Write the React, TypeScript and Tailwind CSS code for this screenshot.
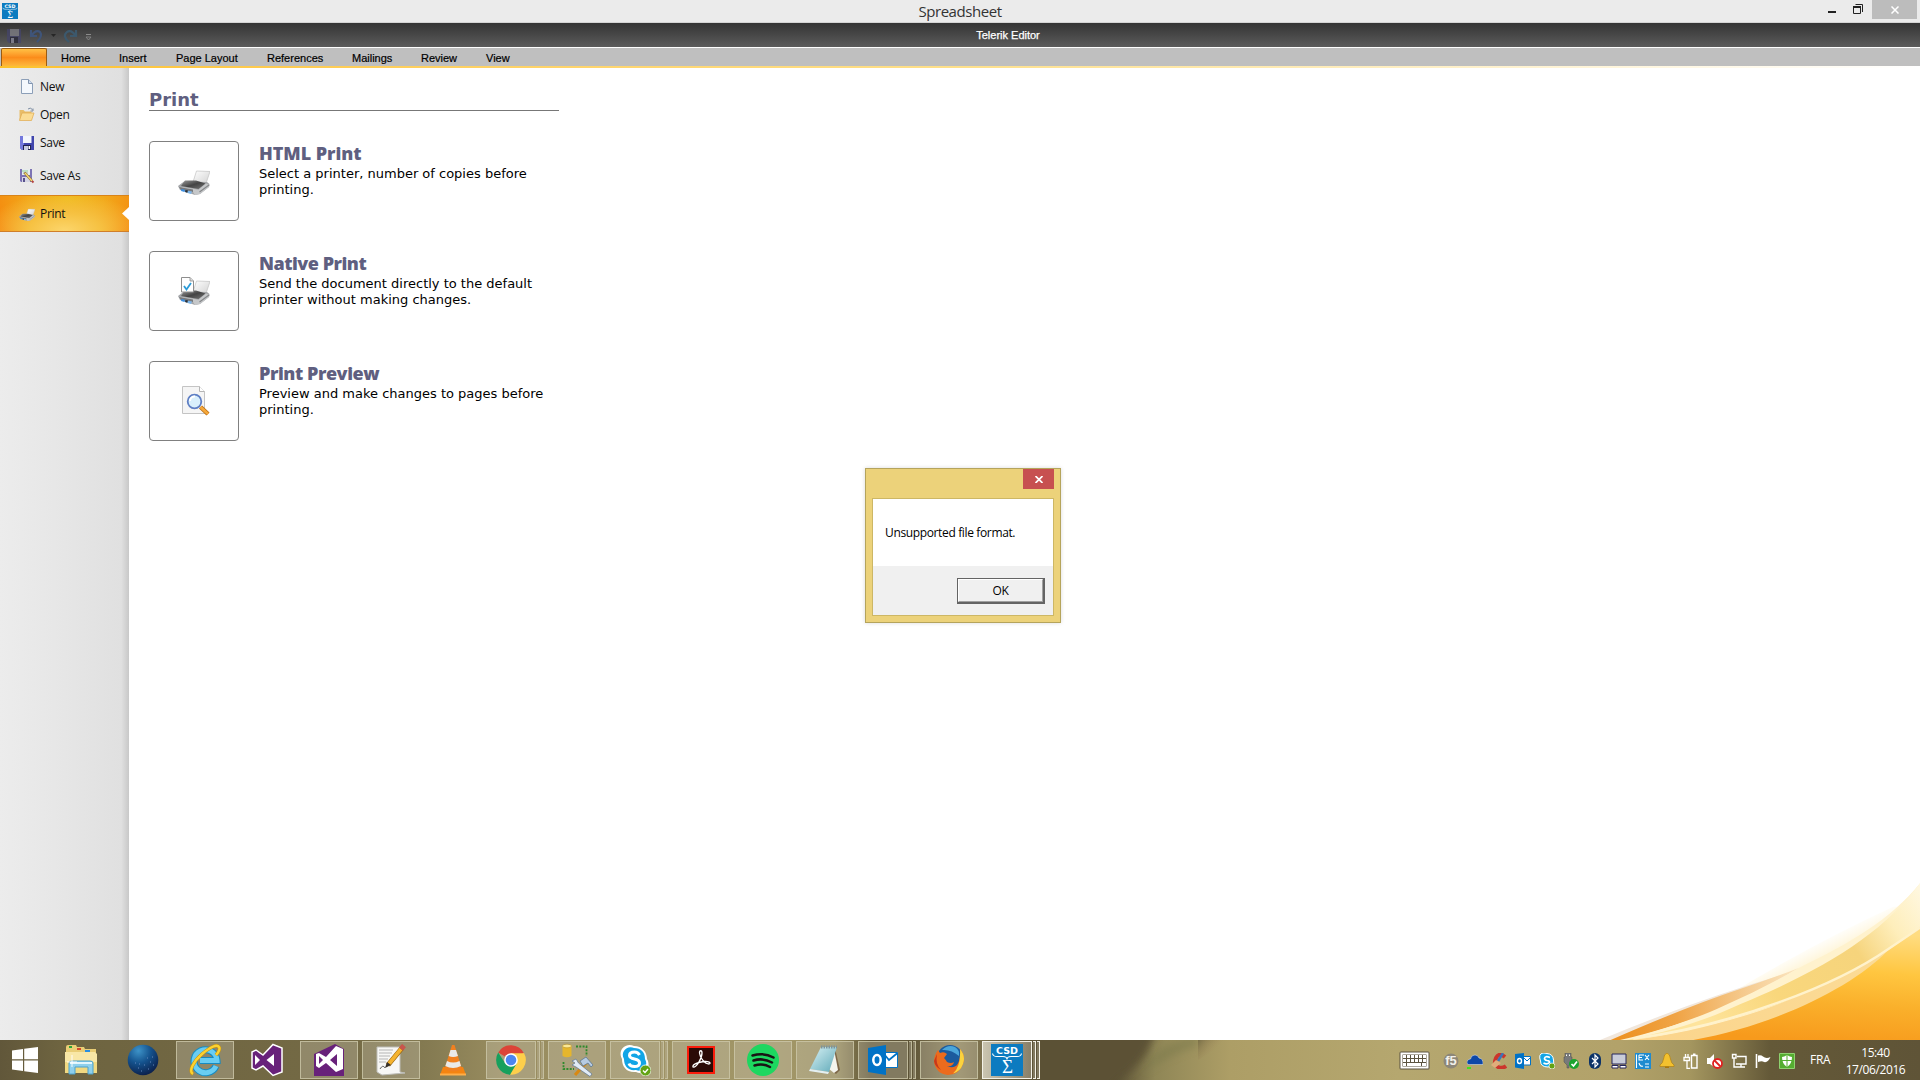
import type { ReactNode } from "react"
import clsx from "clsx"

function PrinterIcon({ size, checked = false }: { size: number; checked?: boolean }) {
  return (
    <svg width={size} height={size} viewBox="0 0 32 32">
      <defs>
        <linearGradient id="printerTop" x1="0" y1="0" x2="1" y2="1">
          <stop offset="0" stopColor="#9a9a9a" />
          <stop offset="0.5" stopColor="#444" />
          <stop offset="1" stopColor="#777" />
        </linearGradient>
        <linearGradient id="printerPaper" x1="0" y1="0" x2="1" y2="1">
          <stop offset="0" stopColor="#fff" />
          <stop offset="1" stopColor="#d0d0d0" />
        </linearGradient>
      </defs>
      <path d="M18.500 6L32 6.500L27.500 20L15 17z" fill="url(#printerPaper)" stroke="#c2c2c2" strokeWidth="0.7" />
      <path d="M0 21L6 16.500L29 17L31.500 19L31 22L22 29L17 30L2 25z" fill="#a4a6a9" />
      <path d="M7 15.500L18 15.500L27.500 18.500L20.500 24L3 21z" fill="url(#printerTop)" />
      <path d="M1 21.500L20.500 24.800L28 18.500L31.500 20L31 22L22 29L17 30L15 27z" fill="#c6c8ca" />
      <path d="M1 22L15 24.500L15 27L3 25z" fill="#77797c" />
      <path d="M3.500 24L7 24.700L6.500 27L3 26z" fill="#3c8ee0" />
      <path d="M7.500 25L10 25.500L9.500 28L7 27z" fill="#26313d" />
      <path d="M10 25.700L14 26.500L13 29L9.500 28z" fill="#7db7ec" />
      <path d="M21.500 27L31 20" stroke="#858789" strokeWidth="1.200" />
      {checked && (
        <>
          <path d="M3.500 2.500H12L15.500 6V17H3.500z" fill="#fff" stroke="#8e8e8e" />
          <path d="M12 2.500V6H15.500" fill="#ddd" stroke="#8e8e8e" strokeWidth="0.8" />
          <path d="M6 11L8.500 14.500L13 8" fill="none" stroke="#2a9bd8" strokeWidth="1.800" />
        </>
      )}
    </svg>
  )
}

function PreviewIcon() {
  return (
    <svg width="32" height="32" viewBox="0 0 32 32">
      <path d="M4.500 1.500H21.500L26.500 6.500V28.500H4.500z" fill="#f5f5f5" stroke="#c4c4c4" />
      <path d="M21.500 1.500V6.500H26.500" fill="#fff" stroke="#b5b5b5" />
      <path d="M22.500 22L30 29" stroke="#b86b12" strokeWidth="4.400" />
      <path d="M22.500 22L30 29" stroke="#f5a83a" strokeWidth="2.800" />
      <circle cx="16.500" cy="16.500" r="6.800" fill="#d9effc" stroke="#5f7fc4" strokeWidth="1.800" />
      <path d="M12 16a4.500 4.500 0 0 1 5-4.500" fill="none" stroke="#fff" strokeWidth="2" />
    </svg>
  )
}

function NewIcon() {
  return (
    <svg width="16" height="16" viewBox="0 0 16 16">
      <path d="M2.500 .5H9.500L13.500 4.500V14.500H2.500z" fill="#f4f8fd" stroke="#8c9fb8" />
      <path d="M9.500 .5V4.500H13.500" fill="#cfdcee" stroke="#8093ad" />
    </svg>
  )
}

function OpenIcon() {
  return (
    <svg width="16" height="16" viewBox="0 0 16 16">
      <path d="M0.500 3H4.500L6 4.500H12.500V13H0.500z" fill="#e8bd6a" />
      <path d="M3 6H15L12.500 13.500H0.500z" fill="#fbdc94" stroke="#e0a94d" strokeWidth="0.7" />
      <path d="M9 2Q12 -0.500 13.500 3M14 1.500V4H11.500" fill="none" stroke="#7e8ea4" />
    </svg>
  )
}

function SaveIcon() {
  return (
    <svg width="16" height="16" viewBox="0 0 16 16">
      <path d="M1 1H15V15H3L1 13z" fill="#4045ac" />
      <path d="M1 1H5V15H3L1 13z" fill="#7378dc" />
      <path d="M4 1H12.500V8H4z" fill="#f3f6fc" />
      <path d="M4 10H12V15H4z" fill="#20224f" />
      <path d="M5 11H9V15H5z" fill="#c7cbe4" />
      <path d="M9.500 11H11V14H9.500z" fill="#fff" />
    </svg>
  )
}

function SaveAsIcon() {
  return (
    <svg width="16" height="16" viewBox="0 0 16 16">
      <path d="M1 1H13V14H2L1 13z" fill="#7d74b4" />
      <path d="M3 1H11V7H3z" fill="#e6ecec" />
      <path d="M3 3H9" stroke="#8fd09a" />
      <path d="M4 5H9" stroke="#a9b9b9" />
      <path d="M3 9H11V14H3z" fill="#d5d5e4" />
      <path d="M4 10H6V14H4z" fill="#58528c" />
      <path d="M5.500 4.500L13 13" stroke="#8e6d28" strokeWidth="2.600" />
      <path d="M6 5L13 13" stroke="#f4d773" strokeWidth="1.500" />
      <path d="M13 13L14.500 14.500" stroke="#b54040" strokeWidth="1.800" />
    </svg>
  )
}

function CsdIcon({ size }: { size: number }) {
  return (
    <svg width={size} height={size} viewBox="0 0 32 32">
      <path d="M0 0H32V32H0z" fill="#0c7bc0" />
      <text x="16" y="9.500" textAnchor="middle" fontSize="9.500" fontWeight="700" textLength="22" lengthAdjust="spacingAndGlyphs" fill="#fff" fontFamily="DejaVu Sans, sans-serif">CSD</text>
      <path d="M1.500 9.500Q2 12.500 6 12.500H12Q16 12.500 16 15.500Q16 12.500 20 12.500H26Q30 12.500 30.500 9.500" fill="none" stroke="#fff" strokeWidth="1.100" />
      <text x="16.500" y="29" textAnchor="middle" fontSize="19" fill="#fff" fontFamily="Liberation Serif, serif">Σ</text>
    </svg>
  )
}

function TitleBar() {
  return (
    <header className="flex h-[23px] border-b border-[#d4d4d4] bg-[#ebebeb]">
      <div className="w-12 shrink-0 pt-[3px] pl-[2px]">
        <CsdIcon size={16} />
      </div>
      <div className="grow pl-[84px] text-center font-['Open_Sans',sans-serif] text-[15px] leading-[22px] tracking-[-0.45px] text-[#333]">
        Spreadsheet
      </div>
      <div className="flex w-[132px] shrink-0">
        <svg width="84" height="22" viewBox="0 0 84 22">
          <path d="M40 11H48V13H40z" fill="#222" />
          <path d="M67.500 4.500H74.500V12" fill="none" stroke="#222" />
          <path d="M65.500 7H72.500V13.500H65.500z" fill="none" stroke="#222" />
          <path d="M65 6H73V8H65z" fill="#222" />
        </svg>
        <div className="flex h-[19px] w-[45px] items-center justify-center bg-[#bcbcbc]">
          <svg width="8" height="8" viewBox="0 0 8 8">
            <path d="M0.500 0.500L7.500 7.500M7.500 0.500L0.500 7.500" stroke="#fff" strokeWidth="1.500" />
          </svg>
        </div>
      </div>
    </header>
  )
}

function QuickAccessBar() {
  return (
    <div className="flex h-6 bg-linear-to-b from-[#343434] to-[#5c5c5c]">
      <svg className="shrink-0" width="96" height="24" viewBox="0 0 96 24">
        <g opacity="0.7">
          <path d="M7 6H21V20H9L7 18z" fill="#45456e" />
          <path d="M10 6H19V13H10z" fill="#85858d" />
          <path d="M10 14H18V20H10z" fill="#242436" />
          <path d="M11 15H14V20H11z" fill="#8c8ca0" />
        </g>
        <path d="M31 7V13H37M31.500 12.500Q36 6 40 9Q43 13 37 19" fill="none" stroke="#3f5478" strokeWidth="2.200" />
        <path d="M51 11H56L53.500 14z" fill="#262626" />
        <path d="M76 7V13H70M75.500 12.500Q71 6 67 9Q62 13 69 19" fill="none" stroke="#3c586c" strokeWidth="2.200" />
        <path d="M86 11.500H91" stroke="#8b8b8b" />
        <path d="M86 14H91L88.500 17z" fill="none" stroke="#8b8b8b" strokeWidth="0.8" />
      </svg>
      <div className="grow text-center font-['Liberation_Sans',sans-serif] text-[11px] leading-[25px] text-white [-webkit-text-stroke:0.25px_#fff]">
        Telerik Editor
      </div>
    </div>
  )
}

const tabs = [
  { label: "Home", width: "w-[58px]" },
  { label: "Insert", width: "w-[57px]" },
  { label: "Page Layout", width: "w-[91px]" },
  { label: "References", width: "w-[85px]" },
  { label: "Mailings", width: "w-[69px]" },
  { label: "Review", width: "w-[65px]" },
  { label: "View", width: "w-[60px]" },
]

function RibbonTabs() {
  return (
    <>
      <nav className="flex h-[19px] border-t border-white bg-[#bfbfbf] font-['Liberation_Sans',sans-serif] text-[11px] leading-5 text-black [-webkit-text-stroke:0.2px_#000]">
        <div className="mr-[14px] ml-px h-[18px] w-[46px] shrink-0 rounded-t-[2px] border border-b-0 border-[#9b5c12] bg-linear-to-b from-[#ffc044] via-[#fb8c1a] to-[#fdb83c]" />
        {tabs.map((tab) => (
          <div key={tab.label} className={clsx("shrink-0 whitespace-nowrap", tab.width)}>
            {tab.label}
          </div>
        ))}
      </nav>
      <div className="h-[2px] bg-linear-to-r from-[#fdc22b] via-[#fee08a] to-white" />
    </>
  )
}

function MenuItem({ icon, label, className }: { icon: ReactNode; label: string; className: string }) {
  return (
    <div className={clsx("flex w-full items-center gap-[5px] pl-[19px]", className)}>
      <div className="w-4 shrink-0">{icon}</div>
      <span className="font-['Open_Sans',sans-serif] text-xs tracking-[-0.3px] text-[#111]">{label}</span>
    </div>
  )
}

function Sidebar() {
  return (
    <aside className="w-[129px] shrink-0 bg-[linear-gradient(90deg,#ececec_0%,#e6e6e6_50%,#e0e0e0_94%,#c8c8c8_100%)] pt-[5px]">
      <MenuItem icon={<NewIcon />} label="New" className="h-7" />
      <MenuItem icon={<OpenIcon />} label="Open" className="h-7" />
      <MenuItem icon={<SaveIcon />} label="Save" className="h-7" />
      <MenuItem icon={<SaveAsIcon />} label="Save As" className="h-[38px]" />
      <div className="relative flex h-[37px] w-[129px] border-t border-b border-t-[#d98418] border-b-[#d07f2a] bg-[radial-gradient(ellipse_62%_110%_at_50%_100%,#fcd66c_0%,#f6c243_45%,transparent_100%),radial-gradient(ellipse_65%_130%_at_52%_10%,#eebc1c_0%,#f2a81a_45%,#f5820c_100%)]">
        <MenuItem icon={<PrinterIcon size={16} />} label="Print" className="h-[35px]" />
        <svg className="absolute top-[11px] right-0" width="7" height="13" viewBox="0 0 7 13">
          <path d="M7 0L0 6.500L7 13z" fill="#fff" />
        </svg>
      </div>
    </aside>
  )
}

const printOptions = [
  {
    title: "HTML Print",
    tracking: "tracking-[-0.05px]",
    text: "Select a printer, number of copies before printing.",
    icon: <PrinterIcon size={32} />,
  },
  {
    title: "Native Print",
    tracking: "tracking-[-0.5px]",
    text: "Send the document directly to the default printer without making changes.",
    icon: <PrinterIcon size={32} checked />,
  },
  {
    title: "Print Preview",
    tracking: "tracking-[-0.45px]",
    text: "Preview and make changes to pages before printing.",
    icon: <PreviewIcon />,
  },
]

function PrintPanel() {
  return (
    <section className="w-[430px] pt-[18px] pl-5">
      <h1 className="h-[25px] border-b border-[#777] font-['DejaVu_Sans',sans-serif] text-[18px] leading-[27px] font-bold text-[#5f5f80]">
        Print
      </h1>
      <div className="flex flex-col gap-[30px] pt-[30px]">
        {printOptions.map((option) => (
          <div key={option.title} className="flex gap-5">
            <div className="flex h-20 w-[90px] shrink-0 items-center justify-center rounded-[4px] border border-[#808080] bg-white">
              {option.icon}
            </div>
            <div className="pt-[2px]">
              <h2
                className={clsx(
                  "mb-[3px] font-['Open_Sans',sans-serif] text-[18px] leading-5 font-extrabold text-[#5f5f80]",
                  option.tracking
                )}
              >
                {option.title}
              </h2>
              <p className="font-['DejaVu_Sans',sans-serif] text-[13px] leading-4 text-black">{option.text}</p>
            </div>
          </div>
        ))}
      </div>
    </section>
  )
}

function Swoosh() {
  return (
    <svg className="absolute right-0 bottom-0" width="330" height="170" viewBox="0 0 990 510">
      <defs>
        <linearGradient id="swBody" x1="0.600" y1="0" x2="0.450" y2="1">
          <stop offset="0" stopColor="#ffdc80" />
          <stop offset="0.350" stopColor="#ffc640" />
          <stop offset="0.650" stopColor="#fab02b" />
          <stop offset="1" stopColor="#f79a1c" />
        </linearGradient>
        <linearGradient id="swBand" gradientUnits="userSpaceOnUse" x1="990" y1="40" x2="350" y2="480">
          <stop offset="0" stopColor="#fff8e2" />
          <stop offset="0.180" stopColor="#feeebb" />
          <stop offset="0.350" stopColor="#f6d47c" />
          <stop offset="0.700" stopColor="#f9d77c" />
          <stop offset="1" stopColor="#fee49c" />
        </linearGradient>
        <linearGradient id="swHaze" gradientUnits="userSpaceOnUse" x1="660" y1="220" x2="700" y2="300">
          <stop offset="0" stopColor="#fff3cf" stopOpacity="0" />
          <stop offset="1" stopColor="#ffedb8" />
        </linearGradient>
        <linearGradient id="swEdge" x1="0" y1="0" x2="1" y2="0">
          <stop offset="0" stopColor="#ec8f1c" />
          <stop offset="0.350" stopColor="#f0a446" />
          <stop offset="0.700" stopColor="#f5c98c" />
          <stop offset="1" stopColor="#fbe6c2" />
        </linearGradient>
        <linearGradient id="swPale" x1="0" y1="0" x2="1" y2="0">
          <stop offset="0" stopColor="#fbd48b" />
          <stop offset="1" stopColor="#fbdc98" />
        </linearGradient>
      </defs>
      <path d="M430 365Q690 210 910 110L940 110Q780 270 560 345z" fill="url(#swHaze)" />
      <path d="M30 510Q330 385 600 308L560 345Q330 400 65 510z" fill="#f1e7dc" />
      <path d="M62 510Q290 410 450 357Q560 320 628 293Q480 380 350 434Q230 475 110 510z" fill="url(#swEdge)" />
      {/* pale rim above the golden band */}
      <path d="M90 510C230 478 330 440 400 408Q520 355 628 293C780 220 900 150 990 40V510z" fill="#fff2cd" />
      <path d="M110 510C260 480 360 445 450 403C700 300 880 190 990 40V190C760 360 430 460 130 510z" fill="url(#swBand)" />
      <path d="M130 510C440 470 760 350 990 172V510z" fill="url(#swPale)" />
      <path d="M310 510C560 465 790 350 895 240L990 178V510z" fill="url(#swBody)" />
      <path d="M130 506C440 463 740 345 895 237L990 173" fill="none" stroke="#fff2cb" strokeWidth="7" />
    </svg>
  )
}

function MessageDialog() {
  return (
    <div className="absolute top-[468px] left-[865px] h-[155px] w-[196px] border border-[#b5a45c] bg-[#ecd27a] font-['Open_Sans',sans-serif] text-xs text-black shadow-[0_0_4px_rgba(0,0,0,0.15)]">
      <div className="flex h-[29px] justify-end pr-[6px]">
        <div className="flex h-5 w-[31px] items-center justify-center bg-[#c75050]">
          <svg className="mt-px" width="8" height="7" viewBox="0 0 8 7">
            <path d="M0.500 0L7.500 7M7.500 0L0.500 7" stroke="#fff" strokeWidth="1.700" />
          </svg>
        </div>
      </div>
      <div className="mx-[6px] h-[118px] border border-[#cdb765] bg-white">
        <div className="h-[67px] pt-[25px] pl-3 leading-[18px] tracking-[-0.36px] whitespace-nowrap">
          Unsupported file format.
        </div>
        <div className="flex h-[49px] justify-end bg-[#f0f0f0] pt-3 pr-2">
          <div className="h-[26px] w-[88px] border border-r-2 border-b-2 border-[#646464]">
            <div className="h-[23px] border border-t-white border-r-[#a0a0a0] border-b-[#a0a0a0] border-l-white text-center leading-[22px] tracking-[-0.3px]">
              OK
            </div>
          </div>
        </div>
      </div>
    </div>
  )
}

type TaskKind = "plain" | "open" | "stack" | "active"

const tasks: { name: string; kind: TaskKind; icon: ReactNode }[] = [
  {
    name: "explorer",
    kind: "plain",
    icon: (
      <svg width="34" height="32" viewBox="0 0 34 32">
        <path d="M2 3Q2 1 4 1H12L13 3H20L21 5H32V29H2z" fill="#e9cd75" />
        <path d="M5 2H8V4H5z" fill="#2aa33a" />
        <path d="M13 4H17V6H13z" fill="#d6452c" />
        <path d="M21 6H26V8H21z" fill="#2a8fe0" />
        <path d="M1 8H31L33 10V28H1z" fill="#f8e7a6" />
        <path d="M1 18H33V29H1z" fill="#f1d981" />
        <path d="M5 30V19Q5 17 8 17H26Q29 17 29 19V30H24V23H11V30z" fill="#8fd0ec" stroke="#4aa1cc" />
        <path d="M6 19H28" stroke="#e2f6fd" strokeWidth="2" />
        <path d="M8 11V23M3 18H13" stroke="#fff" strokeWidth="0.900" />
      </svg>
    ),
  },
  {
    name: "globe",
    kind: "plain",
    icon: (
      <svg width="32" height="32" viewBox="0 0 32 32">
        <defs>
          <radialGradient id="globe" cx="0.350" cy="0.200" r="0.900">
            <stop offset="0" stopColor="#3d93c8" />
            <stop offset="0.450" stopColor="#14528d" />
            <stop offset="1" stopColor="#0a1740" />
          </radialGradient>
        </defs>
        <circle cx="16" cy="16" r="15.300" fill="url(#globe)" />
        <path d="M8 19h1M11 24h1M17 21h1M21 25h1M23 18h1M26 21h1M14 27h1M20 14h1M25 13h1M12 20h1" stroke="#6487bc" />
      </svg>
    ),
  },
  {
    name: "ie",
    kind: "open",
    icon: (
      <svg width="34" height="34" viewBox="0 0 34 34">
        <path d="M28 23A11.500 11.500 0 1 1 29 17.500H12" fill="none" stroke="#168bc2" strokeWidth="7" />
        <path d="M28 23A11.500 11.500 0 1 1 29 17.500H12" fill="none" stroke="#69cdf3" strokeWidth="5" />
        <path d="M5 31C0 28 6 18 14 11S29 1 31 4C32.500 6 30 10 28 12" fill="none" stroke="#c9940c" strokeWidth="3.400" />
        <path d="M5 31C0 28 6 18 14 11S29 1 31 4C32.500 6 30 10 28 12" fill="none" stroke="#fcd231" strokeWidth="2.400" />
      </svg>
    ),
  },
  {
    name: "visual-studio",
    kind: "plain",
    icon: (
      <svg width="34" height="34" viewBox="0 0 34 34">
        <path d="M23 1.500L32 5V29L23 32.500L13 23L6 27L2 25V9L6 7L13 12z" fill="#68217a" stroke="#fff" strokeWidth="1.500" />
        <path d="M5 12V22L10 17zM16.500 17L24 11V23z" fill="#fff" />
      </svg>
    ),
  },
  {
    name: "blend",
    kind: "open",
    icon: (
      <svg width="32" height="34" viewBox="0 0 32 34">
        <path d="M1 11L22 1L31 6V33H1z" fill="#68217a" />
        <path d="M23 3L30 6V26L23 29L13 20L6 25L3 23V11L6 10L13 14z" fill="#fff" />
        <path d="M6 13V21L10 17zM17 17L24 11V23z" fill="#68217a" />
      </svg>
    ),
  },
  {
    name: "editor",
    kind: "open",
    icon: (
      <svg width="32" height="32" viewBox="0 0 32 32">
        <path d="M2 3H25V28L30 29L7 31L2 28z" fill="#f7f7f5" stroke="#bdbdb8" />
        <path d="M4 6H18M4 9H17M4 12H15M4 15H13M4 18H11" stroke="#a5a5a5" strokeWidth="0.800" />
        <path d="M13 21L27 4" stroke="#96630c" strokeWidth="5" />
        <path d="M13 21L26 5" stroke="#f5b32e" strokeWidth="3.600" />
        <path d="M26 5L29 1.500" stroke="#c8554c" strokeWidth="5" />
        <path d="M10 24L12 18L16 21z" fill="#37312a" />
        <path d="M5 25Q8 20 10 24" fill="none" stroke="#666" />
      </svg>
    ),
  },
  {
    name: "vlc",
    kind: "plain",
    icon: (
      <svg width="30" height="32" viewBox="0 0 30 32">
        <path d="M5 23H25L28 31H2z" fill="#f58410" />
        <path d="M14 1H16.500L24 25Q15 30 6.500 25z" fill="#f08020" />
        <path d="M12.500 6H18L20 12Q15 14 10.700 12zM9 17Q15 20 21.500 17L23 22Q15 26 7.300 22z" fill="#e9e9e9" />
        <path d="M2 30.500H28" stroke="#ffae48" strokeWidth="2" />
      </svg>
    ),
  },
  {
    name: "chrome",
    kind: "stack",
    icon: (
      <svg width="30" height="30" viewBox="0 0 30 30">
        <path d="M15 15L2.200 7.500A14.700 14.700 0 0 1 28 8.500z" fill="#dc4437" />
        <path d="M15 15L28 8A14.700 14.700 0 0 1 14 29.600z" fill="#fdcf4b" />
        <path d="M2.200 7.500A14.700 14.700 0 0 0 14 29.700L21 18L9 18z" fill="#17a05d" />
        <path d="M15 8.200H28L21 18z" fill="#fdcf4b" />
        <circle cx="15" cy="15" r="6.800" fill="#fff" />
        <circle cx="15" cy="15" r="5.300" fill="#4c86f0" />
      </svg>
    ),
  },
  {
    name: "sql-tools",
    kind: "open",
    icon: (
      <svg width="32" height="34" viewBox="0 0 32 34">
        <path d="M1.500 3V13Q6 15.500 10.500 13V3z" fill="#e5b62c" />
        <ellipse cx="6" cy="3" rx="4.500" ry="1.800" fill="#fae795" stroke="#ae8515" strokeWidth="0.500" />
        <path d="M15 3.500H25.500V13M2.500 19V26H13" fill="none" stroke="#2f8a2c" strokeWidth="1.800" strokeDasharray="2 1.300" />
        <path d="M14 32L25 20" stroke="#d98912" strokeWidth="3.200" />
        <path d="M19 18L25 14L32 22L30 24L27 20L22 23z" fill="#b6cbe2" stroke="#56718e" strokeWidth="0.700" />
        <path d="M11 18L15 16L17.500 20L31 31L29 33.500L15 24L11 22L14 20z" fill="#e1ebf5" stroke="#5d7590" strokeWidth="0.700" />
      </svg>
    ),
  },
  {
    name: "skype",
    kind: "stack",
    icon: (
      <svg width="32" height="32" viewBox="0 0 32 32">
        <path d="M15 2C23 2 28 8 28 15C33 23 25 32 17 28C8 29 3 23 3 15C-2 6 7-2 15 2z" fill="#fff" />
        <path d="M15 4C22 4 26 8 26 15C30 22 24 29 17 26C9 27 5 22 5 15C1 8 8 1 15 4z" fill="#12a5e6" />
        <path d="M20.500 11Q19 8 15.500 8Q10.500 8 10.500 11.500Q10.500 14 15.500 15Q20.500 16 20.500 19Q20.500 22.500 15.500 22.500Q11 22.500 10 19.500" fill="none" stroke="#fff" strokeWidth="3" />
        <circle cx="26.500" cy="26.500" r="5.500" fill="#62a313" stroke="#fff" strokeWidth="0.800" />
        <path d="M24 26.500L26 28.500L29 25" fill="none" stroke="#fff" strokeWidth="1.400" />
      </svg>
    ),
  },
  {
    name: "acrobat",
    kind: "open",
    icon: (
      <svg width="28" height="28" viewBox="0 0 28 28">
        <path d="M1 1H27V27H1z" fill="#2b0a06" stroke="#fa1d0c" strokeWidth="2" />
        <path d="M6 21C9 22 15 13 15 7C15 4 12.500 4 12.500 7C13 12 18 18 22 18C25 17 21 15 17 15.500C12 16 5 18 6 21z" fill="none" stroke="#fff" strokeWidth="1.300" />
      </svg>
    ),
  },
  {
    name: "spotify",
    kind: "open",
    icon: (
      <svg width="32" height="32" viewBox="0 0 32 32">
        <circle cx="16" cy="16" r="16" fill="#1ed760" />
        <path d="M5.500 11.500Q17 8 26.500 13.500M6.500 16.500Q16 13.500 25 18.500M7.500 21.500Q16 19 23 23" fill="none" stroke="#191414" strokeWidth="2.500" strokeLinecap="round" />
      </svg>
    ),
  },
  {
    name: "notepad",
    kind: "open",
    icon: (
      <svg width="32" height="32" viewBox="0 0 32 32">
        <defs>
          <linearGradient id="notepad" x1="0" y1="0" x2="1" y2="1">
            <stop offset="0" stopColor="#d9f2f5" />
            <stop offset="1" stopColor="#5fa9b8" />
          </linearGradient>
        </defs>
        <path d="M26 4L31 26L27 30L22 26z" fill="#7d6748" />
        <path d="M25 5L29 26L25 29L20 25z" fill="#f4f4ee" />
        <path d="M12 3H28L20 28L1 25z" fill="url(#notepad)" />
        <path d="M1 25L20 28L19 30L0 27z" fill="#e4f0f2" />
        <path d="M12 3H28" stroke="#7d949b" strokeWidth="3" strokeDasharray="1.500 1" />
      </svg>
    ),
  },
  {
    name: "outlook",
    kind: "stack",
    icon: (
      <svg width="32" height="32" viewBox="0 0 32 32">
        <path d="M17 8.500H30.500V23.500H17z" fill="#fff" stroke="#0072c6" />
        <path d="M17 10L22 16L30.500 9" fill="none" stroke="#0072c6" strokeWidth="1.800" />
        <path d="M1 4L19 1V31L1 28z" fill="#0072c6" />
        <ellipse cx="10" cy="16" rx="3.700" ry="4.900" fill="none" stroke="#fff" strokeWidth="2.500" />
      </svg>
    ),
  },
  {
    name: "firefox",
    kind: "open",
    icon: (
      <svg width="32" height="32" viewBox="0 0 32 32">
        <circle cx="17" cy="14" r="13" fill="#1c5b9e" />
        <path d="M9 6Q15 0 22 3Q27 6 26 12Q18 5 9 6z" fill="#4ba6da" />
        <path d="M27 5Q33 12 30 20Q26 31 15 31Q3 30 1 18Q1 11 5 6L7 9Q11 7 14 10L11 14Q13 16 14 18Q18 20 21 18Q20 23 14 22Q23 26 26 17Q28 11 27 5z" fill="#ec6b1d" />
        <path d="M27 5Q33 12 30 20Q27 28 20 29.500Q28 23 27 5z" fill="#fbd33e" />
        <path d="M4 10Q2 20 8 26Q2 23 1 17z" fill="#c7391c" />
      </svg>
    ),
  },
  { name: "csd", kind: "active", icon: <CsdIcon size={32} /> },
]

function TaskButton({ kind, icon }: { kind: TaskKind; icon: ReactNode }) {
  if (kind === "plain") {
    return <div className="flex h-[38px] w-[58px] items-center justify-center">{icon}</div>
  }
  if (kind === "open") {
    return (
      <div className="flex h-[38px] w-[58px] items-center justify-center border border-[#ccc7a8]/80 bg-[#c8c4b0]/35">
        {icon}
      </div>
    )
  }
  const active = kind === "active"
  const border = active ? "border-[#f3f1e6]" : "border-[#ccc7a8]/80"
  return (
    <div className="flex h-[38px] w-[58px] gap-px">
      <div
        className={clsx(
          "flex h-[38px] w-[51px] items-center justify-center border",
          border,
          active ? "bg-linear-to-r from-[#e6e2d2]/75 to-[#c5bfb0]/40" : "bg-[#c8c4b0]/35"
        )}
      >
        {icon}
      </div>
      <div className={clsx("h-[38px] w-[3px] border-y border-r bg-[#c8c4b0]/35", border)} />
      <div className={clsx("h-[38px] w-[3px] border-y border-r bg-[#c8c4b0]/35", border)} />
    </div>
  )
}

const trayIcons: { name: string; icon: ReactNode }[] = [
  {
    name: "f5",
    icon: (
      <>
        <circle cx="8" cy="8" r="7.500" fill="#8d8778" />
        <text x="8" y="12" textAnchor="middle" fontSize="13" fontWeight="700" fill="#f2f0ea" fontFamily="Liberation Sans, sans-serif">f5</text>
      </>
    ),
  },
  {
    name: "onedrive",
    icon: (
      <>
        <path d="M0 10.500Q-0.500 6.500 3.500 6Q4 2 8 2Q11 2 12 5Q16.500 5.500 16 11.500H4Q1 12 0 10.500z" fill="#0d47a8" stroke="#eee" strokeWidth="0.500" />
        <path d="M0 14H4V16H0z" fill="#42e020" />
      </>
    ),
  },
  {
    name: "ccleaner",
    icon: (
      <>
        <path d="M14 4Q8-1 5 5Q2 12 7 14Q11 16 15 13" fill="none" stroke="#cc352c" strokeWidth="4" />
        <path d="M12 0L7 8" stroke="#3b75b8" strokeWidth="2.400" />
        <path d="M5 7L10 10L4 15L0 12z" fill="#e0ad7b" />
      </>
    ),
  },
  {
    name: "outlook",
    icon: (
      <>
        <path d="M8 3.500H15.500V12H8z" fill="#fff" stroke="#0072c6" />
        <path d="M9 5L12 8L15 5" fill="none" stroke="#0072c6" />
        <path d="M0 1L9 0V16L0 14.500z" fill="#0072c6" />
        <ellipse cx="4.500" cy="8" rx="2" ry="2.500" fill="none" stroke="#fff" strokeWidth="1.400" />
      </>
    ),
  },
  {
    name: "skype",
    icon: (
      <>
        <path d="M8 0.500Q14 1 14.500 7Q16 14 9 14Q1.500 14 1.500 8Q-1 1 4 0Q6 0 8 0.500z" fill="#12a5e6" stroke="#fff" />
        <path d="M11 4.500Q6 2.500 5.500 5.500Q5.500 7 8 7.500Q11 8 10.500 9.500Q8 12 4.500 10" fill="none" stroke="#fff" strokeWidth="1.700" />
        <circle cx="13" cy="13" r="3" fill="#62a313" stroke="#fff" strokeWidth="0.700" />
      </>
    ),
  },
  {
    name: "usb",
    icon: (
      <>
        <path d="M2 0H8V4H9V9L6 12V15H4V12L1 9V4H2z" fill="#77797a" stroke="#4e4e4e" strokeWidth="0.500" />
        <path d="M3.500 1.500V3M6.500 1.500V3" stroke="#fff" />
        <circle cx="11" cy="11" r="5" fill="#1ba42e" />
        <path d="M8.500 11L10.500 13L14 8.500" fill="none" stroke="#fff" strokeWidth="1.700" />
      </>
    ),
  },
  {
    name: "bluetooth",
    icon: (
      <>
        <rect x="2" y="0" width="12" height="16" rx="6" fill="#0b3268" />
        <path d="M5 5L11 11L8 14V2L11 5L5 11" fill="none" stroke="#fff" strokeWidth="1.200" />
      </>
    ),
  },
  {
    name: "display",
    icon: (
      <>
        <path d="M1 1H15V11H1z" fill="#c9ccd8" stroke="#26265c" />
        <path d="M1 12.500H7V15H1zM9 12.500H15V15H9z" fill="#fff" stroke="#26265c" />
      </>
    ),
  },
  {
    name: "graphics",
    icon: (
      <>
        <path d="M0 0H16V16H0z" fill="#1f8bd0" />
        <path d="M4 2H9M4 2V7H8M4 4.500H7M10 2L14 7M14 2L10 7M1.500 1.500V15M4 10Q5 14 8 13M10 11H14M10 14H14" fill="none" stroke="#fff" strokeWidth="1.100" />
      </>
    ),
  },
  {
    name: "bell",
    icon: (
      <>
        <path d="M8 0Q11 1 11.500 6Q12 10 15 12V13.500H1V12Q4 10 4.500 6Q5 1 8 0z" fill="#f3c12e" stroke="#a9780e" strokeWidth="0.600" />
        <path d="M6 13.500H10V15H6z" fill="#a9780e" />
      </>
    ),
  },
  {
    name: "power",
    icon: (
      <>
        <path d="M2.500 1V4M5 1V4M1 4.500H6.500V7.500H1zM4 8V15.300H7" fill="none" stroke="#fff" strokeWidth="1.300" />
        <path d="M8.500 2.500H14V15H8.500zM10 1.300H12.500" fill="none" stroke="#fff" strokeWidth="1.400" />
      </>
    ),
  },
  {
    name: "volume",
    icon: (
      <>
        <path d="M0 5H3L7 1V14L3 11H0z" fill="#fff" />
        <circle cx="10.500" cy="10.500" r="4.500" fill="#fff" stroke="#e02020" strokeWidth="1.800" />
        <path d="M7.500 7.500L13.500 13.500" stroke="#e02020" strokeWidth="1.800" />
      </>
    ),
  },
  {
    name: "network",
    icon: (
      <>
        <path d="M6 3.500H15V11H5M10 11V14M6 14H14" fill="none" stroke="#fff" strokeWidth="1.400" />
        <path d="M1.500 1.500H5V5H1.500zM3 5V14H6" fill="none" stroke="#fff" strokeWidth="1.400" />
      </>
    ),
  },
  {
    name: "flag",
    icon: (
      <>
        <path d="M1.500 1V15" stroke="#fff" strokeWidth="1.600" />
        <path d="M3 2.500Q6 1.500 8 3.500Q11 6 15.500 4Q13 10 9 9Q7 7.500 3 9z" fill="#fff" />
      </>
    ),
  },
  {
    name: "security",
    icon: (
      <>
        <path d="M0.500 0.500H15.500V15.500H0.500z" fill="#55ad31" stroke="#8fd16f" />
        <path d="M8 2Q11 4 13 4Q13 11 8 14Q3 11 3 4Q5 4 8 2z" fill="#fff" />
        <path d="M8 2V14M3 7.500H13" stroke="#55ad31" />
      </>
    ),
  },
]

function Taskbar() {
  return (
    <footer className="relative flex h-10 overflow-hidden bg-[linear-gradient(90deg,#61573a_0px,#6e6440_60px,#746a45_350px,#857b52_430px,#988c5f_500px,#a29768_780px,#9c9161_835px,#5d5336_870px,#5d5336_910px,#8e835a_960px,#695e40_1000px,#5b5135_1040px,#5b5135_1115px,#8f8656_1155px,#ad9e66_1230px,#b5a76f_1400px,#b2a26a_1620px,#a4965f_1690px,#645938_1770px,#5f5437_1920px)]">
      {/* diagonal shadow in the wallpaper showing through the bar */}
      <svg className="absolute top-0 left-[1100px]" width="160" height="40" viewBox="0 0 160 40">
        <defs>
          <filter id="wallBlur" x="-30%" y="-30%" width="160%" height="160%">
            <feGaussianBlur stdDeviation="4" />
          </filter>
          <linearGradient id="wallWedge" x1="0" y1="0" x2="1" y2="0.600">
            <stop offset="0" stopColor="#665c3b" stopOpacity="0.600" />
            <stop offset="0.600" stopColor="#a3855a" stopOpacity="0" />
          </linearGradient>
        </defs>
        <path d="M-20 -20H62L46 14Q36 28 20 40L0 60H-20z" fill="#5b5135" filter="url(#wallBlur)" />
        <path d="M46 24Q60 6 98 -6V6Q70 14 46 30z" fill="#77774a" opacity="0.500" filter="url(#wallBlur)" />
        <path d="M98 0H130L98 20z" fill="url(#wallWedge)" />
      </svg>
      <div className="relative flex w-[52px] shrink-0 items-center pl-3">
        <svg width="26" height="26" viewBox="0 0 26 26">
          <path d="M0 3.500L11 2V12.300H0zM12.200 1.800L26 0V12.300H12.200zM0 13.500H11V24L0 22.500zM12.200 13.500H26V26L12.200 24.200z" fill="#fff" />
        </svg>
      </div>
      <div className="relative flex gap-1 pt-px">
        {tasks.map((task) => (
          <TaskButton key={task.name} kind={task.kind} icon={task.icon} />
        ))}
      </div>
      <div className="relative ml-auto flex h-10 items-center">
        <svg className="mr-[9px] mt-px" width="31" height="19" viewBox="0 0 31 19">
          <rect x="0.500" y="0.500" width="30" height="18" rx="1.500" fill="#5b5340" />
          <path d="M1.500 1.500H29.500V17.500H1.500z" fill="#fff" />
          <path d="M3.500 3.500H27.500V15.500H3.500z" fill="#5b5340" />
          <path d="M4 5.500H27M4 9.500H27" stroke="#fff" strokeWidth="3" strokeDasharray="3 1" />
          <path d="M4 13.500H7M8 13.500H22M23 13.500H27" stroke="#fff" strokeWidth="3" />
        </svg>
        <div className="flex pt-[2px]">
          {trayIcons.map((item) => (
            <div key={item.name} className="flex w-6 justify-center">
              <svg width="16" height="16" viewBox="0 0 16 16">
                {item.icon}
              </svg>
            </div>
          ))}
        </div>
        <div className="w-[43px] pl-[11px] font-['Open_Sans',sans-serif] text-xs tracking-[-0.3px] text-white">FRA</div>
        <div className="w-[78px] pt-[2px] pr-[11px] text-center font-['Open_Sans',sans-serif] text-xs leading-[17px] tracking-[-0.4px] whitespace-nowrap text-white">
          <div>15:40</div>
          <div>17/06/2016</div>
        </div>
      </div>
    </footer>
  )
}

export default function App() {
  return (
    <div className="relative flex h-[1080px] w-[1920px] flex-col overflow-hidden bg-white">
      <TitleBar />
      <QuickAccessBar />
      <RibbonTabs />
      <div className="relative flex min-h-0 grow">
        <Sidebar />
        <PrintPanel />
        <Swoosh />
      </div>
      <Taskbar />
      <MessageDialog />
    </div>
  )
}
